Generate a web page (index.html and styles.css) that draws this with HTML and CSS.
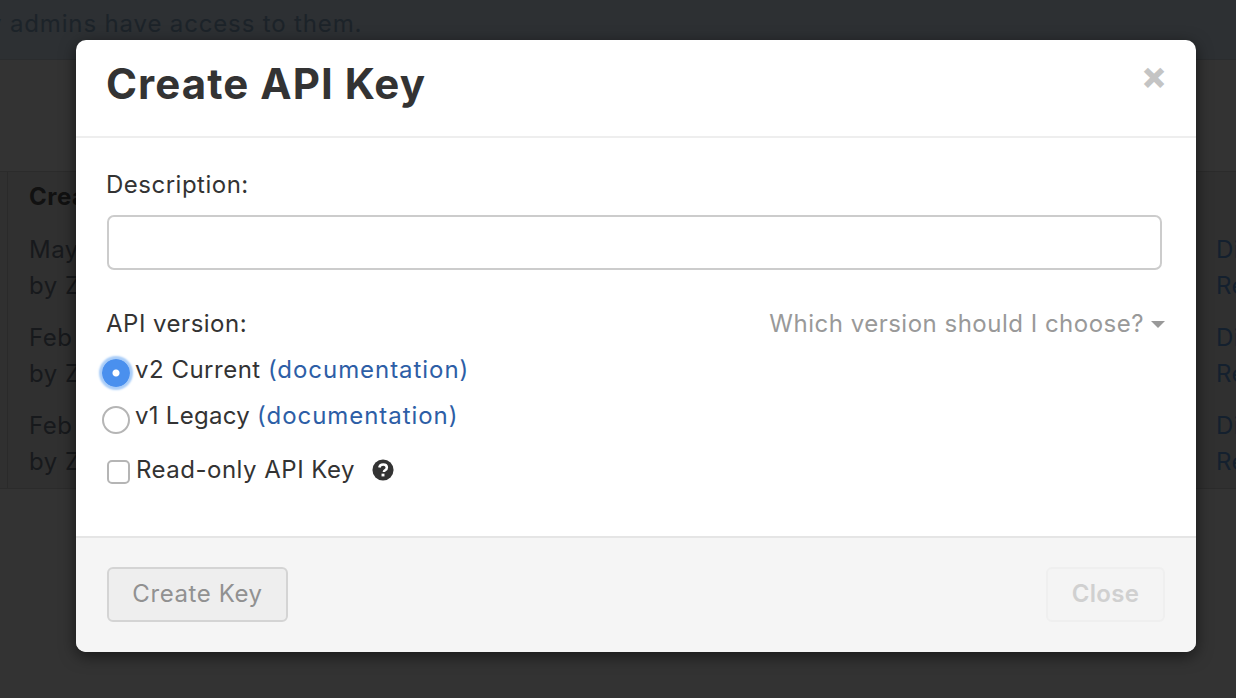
FILE: index.html
```html
<!DOCTYPE html>
<html lang="en">
<head>
<meta charset="utf-8">
<title>Create API Key</title>
<link rel="stylesheet" href="styles.css">
</head>
<body>
<div class="page">
  <div class="banner"><span class="banner-text">Only admins have access to them.</span></div>
  <div class="table">
    <div class="table-inner">
      <div class="row head"><div class="cell">Created</div><div class="cell"></div></div>
      <div class="row"><div class="cell">May 2018<br>by Zach</div><div class="cell">Disable<br>Revoke</div></div>
      <div class="row"><div class="cell">Feb 2018<br>by Zach</div><div class="cell">Disable<br>Revoke</div></div>
      <div class="row"><div class="cell">Feb 2018<br>by Zach</div><div class="cell">Disable<br>Revoke</div></div>
    </div>
  </div>
</div>
<div class="modal">
  <header class="modal-head">
    <h1>Create API Key</h1>
    <span class="dismiss">&#215;</span>
  </header>
  <section class="modal-body">
    <label class="field-label" for="desc">Description:</label>
    <input class="text-input" id="desc" type="text">
    <div class="version-head">
      <span class="version-label">API version:</span>
      <span class="which">Which version should I choose?<i class="caret"></i></span>
    </div>
    <div class="radio-row first">
      <span class="radio on"></span>
      <span>v2 Current <a href="#">(documentation)</a></span>
    </div>
    <div class="radio-row">
      <span class="radio"></span>
      <span class="legacy">v1 Legacy <a href="#">(documentation)</a></span>
    </div>
    <div class="check-row">
      <span class="checkbox"></span>
      <span>Read-only API Key</span>
      <svg class="help" viewBox="0 0 24 24" width="22" height="22"><circle cx="12" cy="12" r="11.5" fill="#333"/><path d="M8 9.300c.3-2.200 2-3.400 4.200-3.400 2.400 0 4 1.400 4 3.300 0 1.600-.9 2.400-2 3.100-.9.600-1.200 1-1.200 1.900" fill="none" stroke="#fff" stroke-width="2.800"/><rect x="10.400" y="16" width="3.200" height="3" fill="#fff"/></svg>
    </div>
  </section>
  <footer class="modal-foot">
    <button class="btn primary" type="button">Create Key</button>
    <button class="btn ghost" type="button">Close</button>
  </footer>
</div>
</body>
</html>
```
FILE: styles.css
```css
* { box-sizing: border-box; }
html, body { margin: 0; height: 100%; overflow: hidden; }
body {
  background: #333;
  font-family: Inter, "Noto Sans", sans-serif;
  font-size: 24px;
  line-height: 36px;
  letter-spacing: .5px;
  color: #333;
}
.page { height: 698px; overflow: hidden; }
.banner {
  height: 60px;
  background: #2d3033;
  border-bottom: 1px solid #2a2c2e;
  padding-top: 6px;
  color: #1c2329;
  letter-spacing: .85px;
  white-space: nowrap;
  overflow: hidden;
}
.banner-text { display: block; margin-left: -53px; }
.table {
  margin-top: 111px;
  padding-left: 7px;
  border-top: 1px solid #2b2b2b;
  border-bottom: 1px solid #2b2b2b;
  height: 318px;
  color: #17191c;
  background: #303030;
}
.table-inner { height: 100%; border-left: 1px solid #2a2a2a; }
.row { display: flex; justify-content: space-between; padding-left: 21px; height: 88px; }
.row.head { height: 60px; font-weight: 700; padding-top: 7px; color: #111; }
.cell:last-child { color: #14202e; margin-right: -30px; width: 50px; overflow: hidden; white-space: nowrap; }
.modal {
  position: absolute;
  left: 76px;
  top: 40px;
  width: 1120px;
  height: 612px;
  background: #fff;
  border-radius: 10px;
  box-shadow: 0 4px 16px rgba(0, 0, 0, .55);
  overflow: hidden;
  display: flex;
  flex-direction: column;
}
.modal-head {
  height: 98px;
  flex: none;
  border-bottom: 2px solid #eee;
  padding: 0 31px;
  display: flex;
  justify-content: space-between;
}
.modal-head h1 {
  margin: 19px 0 0 -1px;
  font-size: 42px;
  line-height: 50px;
  font-weight: 700;
  letter-spacing: 1.05px;
  color: #333;
}
.dismiss {
  font-size: 38px;
  line-height: 40px;
  font-weight: 800;
  letter-spacing: 0;
  color: #c4c4c4;
  margin: 15px -2px 0 0;
}
.modal-body { flex: 1; padding: 29px 31px 0; }
.field-label { display: block; height: 36px; margin-left: -1px; }
.text-input {
  display: block;
  width: 1055px;
  height: 55px;
  margin-top: 12px;
  border: 2px solid #ccc;
  border-radius: 7px;
  background: #fff;
}
.version-head {
  display: flex;
  justify-content: space-between;
  margin-top: 36px;
  width: 1058px;
}
.version-label { margin-left: -1px; }
.which { color: #999; display: flex; align-items: center; }
.caret {
  margin-left: 7px;
  border-top: 7px solid #999;
  border-left: 7px solid transparent;
  border-right: 7px solid transparent;
}
.radio-row { display: flex; align-items: center; height: 46px; margin-left: -5px; gap: 5px; }
.radio-row.first { margin-top: 5px; }
.radio-row a { color: #2d5ea6; text-decoration: none; letter-spacing: .95px; }
.legacy { letter-spacing: .28px; }
.radio {
  width: 28px;
  height: 28px;
  flex: none;
  border-radius: 50%;
  border: 2px solid #b5b5b5;
  background: #fff;
  margin-top: 8px;
}
.radio.on {
  background: radial-gradient(circle, #fff 0 3px, #4a90ee 4px);
  border: 0;
  box-shadow: 0 0 2px 3px #a9cdf8;
  margin-top: 6px;
}
.check-row { display: flex; align-items: center; margin-top: 13px; height: 36px; }
.checkbox {
  width: 23px;
  height: 24px;
  border: 2px solid #b5b5b5;
  border-radius: 5px;
  margin: 3px 6px 0 0;
  flex: none;
}
.help { margin-left: 17px; }
.modal-foot {
  height: 116px;
  flex: none;
  background: #f5f5f5;
  border-top: 2px solid #e5e5e5;
  padding: 29px 31px 0;
  display: flex;
  justify-content: space-between;
}
.btn {
  height: 55px;
  font: inherit;
  border-radius: 6px;
  padding: 0 0 2px;
}
.primary {
  width: 181px;
  background: #eee;
  border: 2px solid #d4d4d4;
  color: #919191;
  letter-spacing: .6px;
}
.ghost {
  width: 119px;
  background: #f4f4f4;
  border: 2px solid #efefef;
  color: #d0d0d0;
  font-weight: 600;
  letter-spacing: .3px;
}
```
